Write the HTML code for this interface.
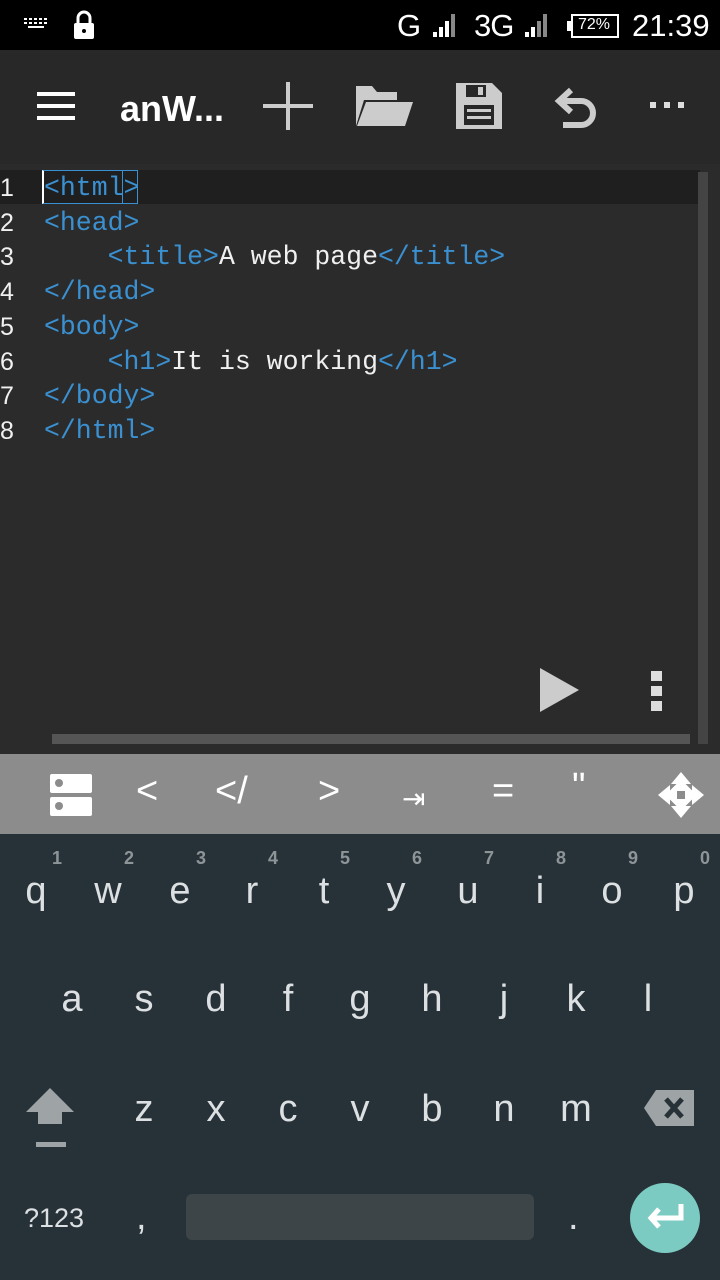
<!DOCTYPE html>
<html><head><meta charset="utf-8"><style>
*{margin:0;padding:0;box-sizing:border-box}
body{width:720px;height:1280px;overflow:hidden;background:#2b2b2b;font-family:"Liberation Sans",sans-serif;position:relative}
.a{position:absolute}
#sb{left:0;top:0;width:720px;height:50px;background:#000}
#tb{left:0;top:50px;width:720px;height:114px;background:#282828}
#ed{left:0;top:164px;width:720px;height:590px;background:#2b2b2b}
.code{font-family:"Liberation Mono",monospace;font-size:26.5px;line-height:34.7px;white-space:pre;color:#f0f0f0}
.t{color:#3a90d0}
.ln{font-family:"Liberation Sans",sans-serif;font-size:25px;line-height:34.7px;color:#f0f0f0}
#acc{left:0;top:754px;width:720px;height:80px;background:#8c8c8c}
#kb{left:0;top:834px;width:720px;height:446px;background:#263238}
.k{position:absolute;width:72px;text-align:center;color:#dde0e2;font-size:38px;font-family:"Liberation Sans",sans-serif}
.n{position:absolute;color:#8e9598;font-size:18px;font-weight:bold}
.ac{position:absolute;color:#fff;font-size:38px;top:770px}
</style></head><body>
<div id="sb" class="a"></div>
<svg class="a" style="left:22px;top:16px" width="28" height="16"><g fill="#fff"><rect x="2" y="2" width="3" height="2"/><rect x="7" y="2" width="3" height="2"/><rect x="12" y="2" width="3" height="2"/><rect x="17" y="2" width="3" height="2"/><rect x="22" y="2" width="3" height="2"/><rect x="2" y="6" width="3" height="2"/><rect x="7" y="6" width="3" height="2"/><rect x="12" y="6" width="3" height="2"/><rect x="17" y="6" width="3" height="2"/><rect x="22" y="6" width="3" height="2"/><rect x="6" y="10" width="16" height="2"/></g></svg>
<svg class="a" style="left:72px;top:10px" width="24" height="30"><path d="M6 13V8a6 6 0 0 1 12 0v5" stroke="#fff" stroke-width="3" fill="none"/><rect x="2" y="13" width="20" height="16" rx="2" fill="#fff"/><circle cx="12" cy="21" r="2" fill="#000"/></svg>
<div class="a" style="left:397px;top:8px;color:#fff;font-size:31px">G</div>
<svg class="a" style="left:432px;top:12px" width="26" height="26"><g fill="#fff"><rect x="1" y="20" width="4" height="5"/><rect x="7" y="15" width="4" height="10"/><rect x="13" y="9" width="4" height="16"/></g><rect x="19" y="2" width="4" height="23" fill="#888"/></svg>
<div class="a" style="left:474px;top:8px;color:#fff;font-size:31px;letter-spacing:-1px">3G</div>
<svg class="a" style="left:524px;top:12px" width="26" height="26"><g fill="#fff"><rect x="1" y="20" width="4" height="5"/><rect x="7" y="15" width="4" height="10"/></g><rect x="13" y="9" width="4" height="16" fill="#888"/><rect x="19" y="2" width="4" height="23" fill="#888"/></svg>
<div class="a" style="left:571px;top:14px;width:48px;height:24px;border:2px solid #fff"></div>
<div class="a" style="left:567px;top:21px;width:4px;height:10px;background:#fff"></div>
<div class="a" style="left:578px;top:16px;color:#fff;font-size:16px">72%</div>
<div class="a" style="left:632px;top:8px;color:#fff;font-size:31px">21:39</div>

<div id="tb" class="a"></div>
<svg class="a" style="left:37px;top:92px" width="38" height="28"><g fill="#fff"><rect y="0" width="38" height="4"/><rect y="12" width="38" height="4"/><rect y="24" width="38" height="4"/></g></svg>
<div class="a" style="left:120px;top:88px;color:#fff;font-size:36px;font-weight:bold">anW...</div>
<svg class="a" style="left:263px;top:82px" width="50" height="50"><rect x="23" y="0" width="4" height="48" fill="#ccc"/><rect x="0" y="22" width="50" height="4" fill="#ccc"/></svg>
<svg class="a" style="left:354px;top:84px" width="60" height="44"><path d="M2 2h16l5 6h20v8H10L2 42z" fill="#ccc"/><path d="M12 18h47l-8 24H3z" fill="#ccc"/></svg>
<svg class="a" style="left:456px;top:83px" width="48" height="46"><path d="M0 0h36l10 10v36H0z" fill="#ccc"/><rect x="10" y="2" width="20" height="12" fill="#282828"/><rect x="22" y="4" width="5" height="8" fill="#ccc"/><rect x="8" y="22" width="30" height="20" fill="#282828"/><rect x="11" y="26" width="24" height="3" fill="#ccc"/><rect x="11" y="33" width="24" height="3" fill="#ccc"/></svg>
<svg class="a" style="left:553px;top:86px" width="46" height="42"><path d="M18 4L6 15l12 11" fill="none" stroke="#ccc" stroke-width="6"/><path d="M8 15h20a12 12 0 0 1 0 24H10" fill="none" stroke="#ccc" stroke-width="6"/></svg>
<svg class="a" style="left:650px;top:100px" width="36" height="10"><g fill="#ddd"><rect x="0" y="2" width="6" height="6"/><rect x="14" y="2" width="6" height="6"/><rect x="28" y="2" width="6" height="6"/></g></svg>

<div id="ed" class="a"></div>
<div class="a" style="left:0;top:170px;width:700px;height:34px;background:#1f1f1f"></div>
<div class="a" style="left:698px;top:172px;width:10px;height:572px;background:#444"></div>
<div class="a" style="left:42px;top:170px;width:96px;height:34px;border:1px solid #3a90d0;border-left:2px solid #fff"></div>
<div class="a" style="left:122px;top:170px;width:1px;height:34px;background:#3a90d0"></div>
<div class="a ln" style="left:0;top:171px">1<br>2<br>3<br>4<br>5<br>6<br>7<br>8</div>
<div class="a code" style="left:44px;top:171px"><span class="t">&lt;html&gt;</span>
<span class="t">&lt;head&gt;</span>
    <span class="t">&lt;title&gt;</span>A web page<span class="t">&lt;/title&gt;</span>
<span class="t">&lt;/head&gt;</span>
<span class="t">&lt;body&gt;</span>
    <span class="t">&lt;h1&gt;</span>It is working<span class="t">&lt;/h1&gt;</span>
<span class="t">&lt;/body&gt;</span>
<span class="t">&lt;/html&gt;</span></div>
<svg class="a" style="left:540px;top:668px" width="40" height="44"><path d="M0 0L39 22L0 44z" fill="#ccc"/></svg>
<svg class="a" style="left:651px;top:671px" width="12" height="42"><g fill="#ddd"><rect width="11" height="10"/><rect y="15" width="11" height="10"/><rect y="30" width="11" height="10"/></g></svg>
<div class="a" style="left:52px;top:734px;width:638px;height:10px;background:#555"></div>

<div id="acc" class="a"></div>
<svg class="a" style="left:50px;top:774px" width="42" height="42"><rect x="0" y="0" width="42" height="19" rx="2" fill="#fff"/><rect x="0" y="23" width="42" height="19" rx="2" fill="#fff"/><circle cx="9" cy="9" r="4" fill="#8c8c8c"/><circle cx="9" cy="32" r="4" fill="#8c8c8c"/></svg>
<div class="ac" style="left:136px">&lt;</div>
<div class="ac" style="left:215px">&lt;/</div>
<div class="ac" style="left:318px">&gt;</div>
<div class="ac" style="left:402px;font-size:28px;top:782px">⇥</div>
<div class="ac" style="left:492px">=</div>
<div class="ac" style="left:572px;top:766px">"</div>
<svg class="a" style="left:658px;top:772px" width="46" height="46"><g fill="#fff"><path d="M23 0l10 12H13z"/><path d="M23 46l10-12H13z"/><path d="M0 23l12-10v20z"/><path d="M46 23l-12-10v20z"/><rect x="12" y="12" width="22" height="22" transform="rotate(45 23 23)"/></g><g fill="#8c8c8c"><rect x="19" y="19" width="8" height="8"/></g></svg>

<div id="kb" class="a"></div>
<div class="n" style="left:52px;top:848px">1</div><div class="n" style="left:124px;top:848px">2</div><div class="n" style="left:196px;top:848px">3</div><div class="n" style="left:268px;top:848px">4</div><div class="n" style="left:340px;top:848px">5</div><div class="n" style="left:412px;top:848px">6</div><div class="n" style="left:484px;top:848px">7</div><div class="n" style="left:556px;top:848px">8</div><div class="n" style="left:628px;top:848px">9</div><div class="n" style="left:700px;top:848px">0</div>
<div class="k" style="left:0;top:870px">q</div><div class="k" style="left:72px;top:870px">w</div><div class="k" style="left:144px;top:870px">e</div><div class="k" style="left:216px;top:870px">r</div><div class="k" style="left:288px;top:870px">t</div><div class="k" style="left:360px;top:870px">y</div><div class="k" style="left:432px;top:870px">u</div><div class="k" style="left:504px;top:870px">i</div><div class="k" style="left:576px;top:870px">o</div><div class="k" style="left:648px;top:870px">p</div>
<div class="k" style="left:36px;top:978px">a</div><div class="k" style="left:108px;top:978px">s</div><div class="k" style="left:180px;top:978px">d</div><div class="k" style="left:252px;top:978px">f</div><div class="k" style="left:324px;top:978px">g</div><div class="k" style="left:396px;top:978px">h</div><div class="k" style="left:468px;top:978px">j</div><div class="k" style="left:540px;top:978px">k</div><div class="k" style="left:612px;top:978px">l</div>
<div class="k" style="left:108px;top:1088px">z</div><div class="k" style="left:180px;top:1088px">x</div><div class="k" style="left:252px;top:1088px">c</div><div class="k" style="left:324px;top:1088px">v</div><div class="k" style="left:396px;top:1088px">b</div><div class="k" style="left:468px;top:1088px">n</div><div class="k" style="left:540px;top:1088px">m</div>
<svg class="a" style="left:26px;top:1088px" width="48" height="60"><path d="M24 0L48 24H36V36H12V24H0z" fill="#9ea3a5"/><rect x="10" y="54" width="30" height="5" fill="#9ea3a5"/></svg>
<svg class="a" style="left:644px;top:1090px" width="50" height="36"><path d="M12 0H50V36H12L0 18z" fill="#9ea3a5"/><path d="M22 9L38 27M38 9L22 27" stroke="#263238" stroke-width="5"/></svg>
<div class="a" style="left:24px;top:1203px;color:#dde0e2;font-size:27px">?123</div>
<div class="a" style="left:136px;top:1196px;color:#dde0e2;font-size:38px">,</div>
<div class="a" style="left:186px;top:1194px;width:348px;height:46px;background:#3d4548;border-radius:6px"></div>
<div class="a" style="left:568px;top:1196px;color:#dde0e2;font-size:38px">.</div>
<div class="a" style="left:630px;top:1183px;width:70px;height:70px;border-radius:50%;background:#7ccbc2"></div>
<svg class="a" style="left:645px;top:1200px" width="42" height="36"><path d="M36 4V18H8" fill="none" stroke="#fff" stroke-width="5"/><path d="M14 9L6 18l8 9" fill="none" stroke="#fff" stroke-width="5"/></svg>
</body></html>
